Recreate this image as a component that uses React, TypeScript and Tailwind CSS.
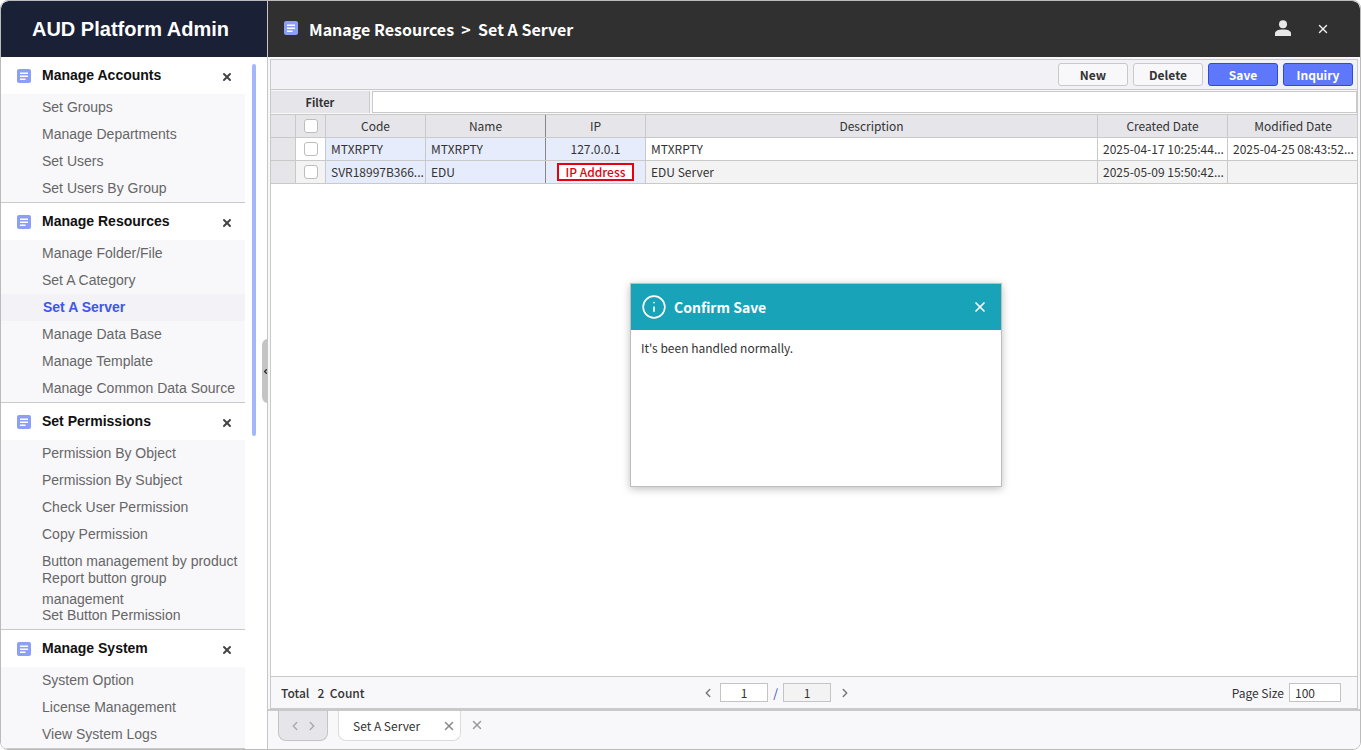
import React from 'react';
import { Info, X, ChevronLeft, ChevronRight } from 'lucide-react';

const menus = [
  { title: 'Manage Accounts', items: ['Set Groups', 'Manage Departments', 'Set Users', 'Set Users By Group'] },
  { title: 'Manage Resources', items: ['Manage Folder/File', 'Set A Category', 'Set A Server', 'Manage Data Base', 'Manage Template', 'Manage Common Data Source'] },
  { title: 'Set Permissions', items: ['Permission By Object', 'Permission By Subject', 'Check User Permission', 'Copy Permission', 'Button management by product', 'Report button group management', 'Set Button Permission'] },
  { title: 'Manage System', items: ['System Option', 'License Management', 'View System Logs'] },
];

const cols = 'grid grid-cols-[25px_30px_100px_120px_100px_452px_130px_130px]';
const krFont = "font-['Noto_Sans_CJK_KR',sans-serif]";

const DocIcon = ({ className }: { className: string }) => (
  <svg viewBox="0 0 14 14" className={className}>
    <rect width="14" height="14" rx="2" fill="#8a9ff5" />
    <path d="M3 3.5h8v1.5H3zM3 6.5h8V8H3zM3 9.5h5.5V11H3z" fill="#fff" />
  </svg>
);

const Sidebar = () => (
  <div className="w-[267px] shrink-0 border-r border-[#c6c6c6] flex flex-col overflow-hidden bg-white relative">
    <div className="h-14 shrink-0 bg-[#1a2036] text-white flex items-center justify-center text-[20px] font-bold pr-[7px] rounded-tl-lg">
      AUD Platform Admin
    </div>
    <div className="w-[244px] font-['Liberation_Sans',sans-serif]">
      {menus.map((menu) => (
        <div key={menu.title} className="border-b border-[#c9c9c9]">
          <div className="h-[37px] flex items-center pl-4 pr-[12px] bg-white">
            <DocIcon className="w-[14px] h-[14px] mt-[1px]" />
            <span className="ml-[11px] flex-1 text-[14px] font-bold text-[#111]">{menu.title}</span>
            <X className="w-3 h-3 mt-[3px] text-[#444]" strokeWidth={4} />
          </div>
          <div className="bg-[#f8f8fb]">
            {menu.items.map((item) =>
              item === 'Set A Server' ? (
                <div key={item} className="h-[27px] flex items-center pl-[42px] text-[14px] font-bold text-[#3f56e8] bg-[#f2f2f7]">
                  {item}
                </div>
              ) : (
                <div key={item} className="h-[27px] flex items-center pl-[41px] text-[14px] text-[#666]">
                  {item}
                </div>
              ),
            )}
          </div>
        </div>
      ))}
    </div>
    <div className="absolute left-[251px] top-[63px] w-1 h-[372px] rounded-sm bg-[#a3b8fb]" />
    <div className="absolute left-[261px] top-[338px] w-[6px] h-16 rounded-l-md bg-[#c4c4c4] flex items-center justify-center">
      <ChevronLeft className="w-[7px] h-[7px] text-[#333] shrink-0" strokeWidth={5} />
    </div>
  </div>
);

const Cell = ({ className = '', children }: { className?: string; children?: React.ReactNode }) => (
  <div className={`border-r border-[#c9c9c9] flex items-center overflow-hidden whitespace-nowrap px-[5px] text-[12px] text-[#333] ${className}`}>
    {children}
  </div>
);

const Check = () => <span className="w-[14px] h-[14px] rounded-[3px] border border-[#bdbdbd] bg-white" />;

const Btn = ({ label, blue }: { label: string; blue?: boolean }) => (
  <div
    className={`w-[70px] h-[23px] rounded-[3px] border flex items-center justify-center text-[12px] font-bold ${
      blue ? 'bg-[#5f78fb] border-[#2f49d8] text-white' : 'bg-[#f8f8fb] border-[#c9c9c9] text-[#333]'
    }`}
  >
    {label}
  </div>
);

const Grid = () => (
  <div className="border-y border-[#c9c9c9]">
    <div className={`${cols} h-[23px] bg-[#e6e6ea] border-b border-[#c9c9c9]`}>
      <Cell />
      <Cell className="justify-center"><Check /></Cell>
      <Cell className="justify-center">Code</Cell>
      <Cell className="justify-center border-r-[#888]">Name</Cell>
      <Cell className="justify-center">IP</Cell>
      <Cell className="justify-center">Description</Cell>
      <Cell className="justify-center">Created Date</Cell>
      <Cell className="justify-center border-r-0">Modified Date</Cell>
    </div>
    <div className={`${cols} h-[23px] bg-white border-b border-[#c9c9c9]`}>
      <Cell className="bg-[#e6e6ea]" />
      <Cell className="justify-center"><Check /></Cell>
      <Cell className="bg-[#e6ecfb]">MTXRPTY</Cell>
      <Cell className="bg-[#e6ecfb] border-r-[#888]">MTXRPTY</Cell>
      <Cell className="bg-[#e6ecfb] justify-center">127.0.0.1</Cell>
      <Cell>MTXRPTY</Cell>
      <Cell>2025-04-17 10:25:44...</Cell>
      <Cell className="border-r-0">2025-04-25 08:43:52...</Cell>
    </div>
    <div className={`${cols} h-[22px] bg-[#f3f3f3]`}>
      <Cell className="bg-[#e6e6ea]" />
      <Cell className="justify-center"><Check /></Cell>
      <Cell className="bg-[#e6ecfb]">SVR18997B366...</Cell>
      <Cell className="bg-[#e6ecfb] border-r-[#888]">EDU</Cell>
      <Cell className="bg-[#e6ecfb] justify-center">
        <span className="w-[77px] h-[18px] border-2 border-[#e60012] bg-white text-[#e60012] font-medium flex items-center justify-center">
          IP Address
        </span>
      </Cell>
      <Cell>EDU Server</Cell>
      <Cell>2025-05-09 15:50:42...</Cell>
      <Cell className="border-r-0" />
    </div>
  </div>
);

const Main = () => (
  <div className={`flex-1 min-w-0 flex flex-col bg-[#f8f8fb] ${krFont}`}>
    <div className="h-14 shrink-0 bg-[#303030] text-white flex items-center pl-4 pr-[30px] rounded-tr-lg">
      <DocIcon className="w-[14px] h-[14px] mb-[2px]" />
      <span className="ml-[11px] text-[16px] font-bold flex-1">Manage Resources &nbsp;&gt;&nbsp; Set A Server</span>
      <svg viewBox="0 0 16 16" className="w-4 h-4 mr-[25px] mb-[2px]" fill="#e8e8e8">
        <circle cx="8" cy="4.2" r="4" />
        <path d="M0 16v-2.5C0 11 3 9.5 8 9.5s8 1.500 8 4V16z" />
      </svg>
      <X className="w-[14px] h-[14px] text-[#eee] mb-[1px]" strokeWidth={2.5} />
    </div>
    <div className="mt-[2px] mx-[2px] h-[650px] border border-[#c9c9c9] flex flex-col bg-white">
      <div className="h-[30px] shrink-0 bg-[#f1f1f6] flex items-center justify-end gap-[5px] pr-[4px] border-b border-[#c9c9c9]">
        <Btn label="New" />
        <Btn label="Delete" />
        <Btn label="Save" blue />
        <Btn label="Inquiry" blue />
      </div>
      <div className="h-[24px] shrink-0 flex items-stretch bg-[#f8f8fb] pt-[1px] pb-[1px]">
        <div className="w-[99px] bg-[#e6e6ea] border-r border-[#c9c9c9] flex items-center justify-center text-[11px] font-semibold text-[#333]">
          Filter
        </div>
        <div className="w-[2px]" />
        <div className="flex-1 border border-[#c9c9c9] bg-white" />
      </div>
      <Grid />
      <div className="flex-1" />
      <div className="h-[32px] shrink-0 border-t border-[#c9c9c9] bg-[#f8f8fb] flex items-center text-[12px] text-[#333] pr-4">
        <div className="w-[430px] pl-[10px] font-medium whitespace-pre">Total   2  Count</div>
        <ChevronLeft className="w-[14px] h-[14px] text-[#777]" strokeWidth={2.5} />
        <span className="ml-[5px] w-[48px] h-[19px] border border-[#c4c4c4] bg-white flex items-center justify-center">1</span>
        <span className="w-[15px] text-center text-[#1d4fa8]">/</span>
        <span className="w-[48px] h-[19px] border border-[#c4c4c4] bg-[#f3f3f3] flex items-center justify-center">1</span>
        <ChevronRight className="ml-[7px] w-[14px] h-[14px] text-[#777]" strokeWidth={2.5} />
        <span className="ml-auto mr-[5px]">Page Size</span>
        <span className="w-[52px] h-[19px] border border-[#c4c4c4] bg-white pl-[5px] flex items-center">100</span>
      </div>
    </div>
    <div className="flex-1 flex border-t-2 border-[#c9c9c9] ml-0 items-start pl-[10px] text-[12px] text-[#333]">
      <div className="w-[50px] h-[30px] rounded-b-lg border border-t-0 border-[#c4c4c4] bg-[#e6e6ea] flex items-center justify-center gap-[3px]">
        <ChevronLeft className="w-[14px] h-[14px] text-[#aaa]" strokeWidth={2.5} />
        <ChevronRight className="w-[14px] h-[14px] text-[#aaa]" strokeWidth={2.5} />
      </div>
      <div className="ml-[10px] w-[123px] h-[30px] rounded-b-lg border border-t-0 border-[#dcdcdc] bg-white flex items-center pl-[14px] pr-[4px]">
        <span className="flex-1">Set A Server</span>
        <X className="w-[14px] h-[14px] text-[#888]" strokeWidth={2.5} />
      </div>
      <X className="ml-[9px] mt-[7px] w-[14px] h-[14px] text-[#999]" strokeWidth={2.5} />
    </div>
  </div>
);

const Dialog = () => (
  <div className={`absolute left-[629px] top-[282px] w-[372px] h-[204px] border border-[#bdbdbd] bg-white shadow-[0_2px_8px_rgba(0,0,0,0.25)] ${krFont}`}>
    <div className="h-[46px] bg-[#18a3b9] flex items-center pl-[10px] pr-[13px] text-white">
      <Info className="w-[26px] h-[26px]" strokeWidth={1.5} />
      <span className="ml-[7px] flex-1 text-[14px] font-bold">Confirm Save</span>
      <X className="w-[16px] h-[16px]" strokeWidth={2.5} />
    </div>
    <div className="pl-[10px] pt-[9px] text-[12px] text-[#333]">It's been handled normally.</div>
  </div>
);

export default function App() {
  return (
    <div className="relative w-[1361px] h-[750px] overflow-hidden bg-white border border-[#bbb] rounded-lg flex font-['Liberation_Sans',sans-serif]">
      <Sidebar />
      <Main />
      <Dialog />
    </div>
  );
}
